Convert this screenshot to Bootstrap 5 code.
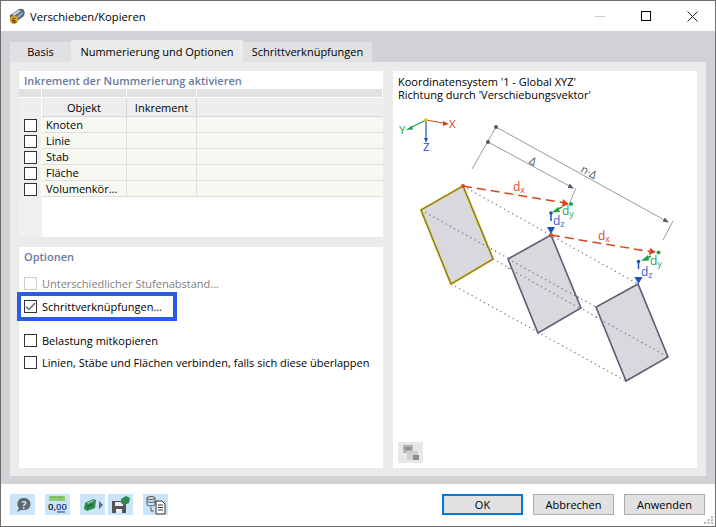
<!DOCTYPE html>
<html lang="de">
<head>
  <meta charset="UTF-8" />
  <title>Verschieben/Kopieren</title>
  <link href="https://cdn.jsdelivr.net/npm/bootstrap@5.3.3/dist/css/bootstrap.min.css" rel="stylesheet">
  <style>
    html, body { height: 527px; overflow: hidden; }
    body { font-family: "Open Sans", "Liberation Sans", sans-serif; font-size: 11px; line-height: 13px; color: #000; background: #fff; }
    .win { height: 527px; border: 1px solid #6f6f6f; display: flex; flex-direction: column; }
    .titlebar { height: 30px; flex: none; background: #fff; padding-left: 7px; font-size: 11.2px; }
    .ctl { width: 46px; height: 30px; display: flex; align-items: center; justify-content: center; }
    .dlg { height: 453px; flex: none; background: #d2d1d6; padding: 9px 9px 8px 9px; display: flex; flex-direction: column; }
    .nav-tabs.tabbar { border: 0; height: 22px; flex: none; align-items: flex-end; }
    .tabbar .nav-link { border: 0; border-radius: 0; background: #e1e1e3; color: #000; height: 20px; padding: 3px 0 0 0; text-align: center; margin: 0; line-height: 14px; }
    .tabbar .nav-link.active { background: #ebebeb; color: #000; height: 22px; padding-top: 5px; }
    .tb1 { width: 61px; } .tb2 { width: 172px; } .tb3 { width: 129px; }
    .pane { flex: 1; background: #ebebeb; padding: 9px 9px 8px 9px; display: flex; gap: 10px; min-height: 0; }
    .leftcol { width: 364px; display: flex; flex-direction: column; gap: 10px; }
    .whitebox { background: #fff; }
    .box-a { height: 166px; display: flex; flex-direction: column; }
    .box-b { flex: 1; }
    .box-c { width: 304px; position: relative; }
    .grp-title { color: #6a7a9e; font-weight: 600; height: 18px; padding: 3px 0 0 5px; }
    .gridwrap { flex: 1; background: #fff; position: relative; }
    .sheet { border-collapse: separate; border-spacing: 0; width: 364px; table-layout: fixed; }
    .sheet td, .sheet th { padding: 0; font-weight: 400; overflow: hidden; white-space: nowrap; }
    .sheet .band td { height: 9px; background: #e1e1e1; border-right: 1px solid #fff; border-bottom: 1px solid #fff; }
    .sheet .head th { height: 19px; background: #eee; text-align: center; border-right: 1px solid #d6d6d6; border-bottom: 1px solid #d6d6d6; }
    .sheet .head th:first-child { border-right: 1px solid #fff; border-bottom: 0; }
    .sheet .head th:last-child { border-right: 0; }
    .sheet .item td { height: 16px; background: #f7f8f2; border-right: 1px solid #dedede; border-bottom: 1px solid #dedede; padding-left: 4px; }
    .sheet .item td:first-child { background: #eee; border-right: 1px solid #fff; border-bottom: 0; padding: 0 0 0 5px; line-height: 0; }
    .sheet .item td:last-child { border-right: 0; }
    .rowfill { position: absolute; left: 0; top: 108px; bottom: 0; width: 23px; background: #f0f0f0; }
    .ck.form-check-input { width: 13px; height: 13px; margin: 0; border: 1px solid #333; border-radius: 0; background-color: #fff; flex: none; box-shadow: none; float: none; vertical-align: top; opacity: 1; }
    .ck.form-check-input:checked { background-color: #fff; border-color: #333; background-image: url("data:image/svg+xml,%3Csvg xmlns='http://www.w3.org/2000/svg' viewBox='0 0 13 13'%3E%3Cpath d='M2 6.5l3 3L11 3' fill='none' stroke='%23666' stroke-width='1.4'/%3E%3C/svg%3E"); background-size: 13px 13px; }
    .ck.form-check-input:disabled { border-color: #ccc; opacity: 1; }
    .opt { display: flex; align-items: center; gap: 5px; padding-left: 5px; height: 22px; white-space: nowrap; }
    .opt-off { color: #7f7f7f; margin-top: 7px; }
    .opt-gap { margin-top: 8px; }
    .marked { width: 160px; height: 29px; margin-left: -2px; margin-top: -2px; padding-left: 3px; border: 4px solid #2b5ce6; gap: 5px; display: flex; align-items: center; }
    .caption { padding: 4px 0 0 5px; }
    .drawing { position: absolute; left: 0; top: 29px; }
    .mini { position: absolute; left: 5px; top: 371px; width: 25px; height: 21px; background: #e8e8e8; padding: 0; border: 0; line-height: 0; }
    .foot { flex: 1; background: #fff; position: relative; padding: 10px 10px 0 9px; display: flex; }
    .tool { width: 25px; height: 21px; padding: 0; border: 0; border-radius: 0; background: #cce4f7; line-height: 0; display: flex; align-items: center; justify-content: center; }
    .cmd { width: 81px; height: 21px; padding: 0; border: 1px solid #adadad; border-radius: 0; background: #e1e1e1; color: #000; font-size: 11px; line-height: 13px; }
    .cmd:hover { background: #e1e1e1; color: #000; border-color: #adadad; }
    .cmd-main { border: 2px solid #0078d7; }
    .cmd-main:hover { border-color: #0078d7; }
    .grip { position: absolute; right: 1px; bottom: 1px; line-height: 0; }
    svg text { font-family: "Open Sans", "Liberation Sans", sans-serif; }
    .ms-10px { margin-left: 10px; }
    .ms-3px { margin-left: 3px; }
    .gap-10px { gap: 10px; }
    .flex-none { flex: none; }
  </style>
</head>
<body>
<div class="win">
  <div class="titlebar d-flex align-items-center">
    <svg width="18" height="18" viewBox="0 0 18 18" class="flex-none">
      <path d="M2 8 L11 2 Q14 1 16 3 Q17.500 6 16 9 L8 15 Q4 16 2.500 13 Q1.500 10 2 8Z" fill="#5c6b7c"/>
      <path d="M4 7 L11 3 L13 4 L6 9Z" fill="#c6d0da"/><path d="M8 10 L14 5 L15 7 L9 12Z" fill="#97a6b5"/>
      <circle cx="6" cy="13" r="4" fill="#d9a521"/>
      <text x="6" y="16" font-size="7.500" font-weight="700" text-anchor="middle" fill="#5a4300">6</text>
    </svg>
    <span class="ms-1">Verschieben/Kopieren</span>
    <div class="ms-auto d-flex">
      <div class="ctl"><svg width="10" height="10"><path d="M0 5.500H10" stroke="#ccc"/></svg></div>
      <div class="ctl"><svg width="10" height="10"><rect x=".5" y=".5" width="9" height="9" fill="none" stroke="#000"/></svg></div>
      <div class="ctl"><svg width="11" height="11"><path d="M.5 .5L10.500 10.500M10.500 .5L.5 10.500" stroke="#222"/></svg></div>
    </div>
  </div>

  <div class="dlg">
    <ul class="nav nav-tabs tabbar">
      <li class="nav-item"><a class="nav-link tb1" href="#">Basis</a></li>
      <li class="nav-item"><a class="nav-link tb2 active" href="#">Nummerierung und Optionen</a></li>
      <li class="nav-item"><a class="nav-link tb3" href="#">Schrittverknüpfungen</a></li>
    </ul>
    <div class="pane">
      <div class="leftcol">
        <div class="whitebox box-a">
          <div class="grp-title">Inkrement der Nummerierung aktivieren</div>
          <div class="gridwrap">
            <div class="rowfill"></div>
            <table class="sheet position-relative">
              <colgroup><col style="width:23px"><col style="width:85px"><col style="width:70px"><col></colgroup>
              <tr class="band"><td></td><td></td><td></td><td></td></tr>
              <tr class="head"><th></th><th>Objekt</th><th>Inkrement</th><th></th></tr>
              <tr class="item"><td><input class="form-check-input ck" type="checkbox"></td><td>Knoten</td><td></td><td></td></tr>
              <tr class="item"><td><input class="form-check-input ck" type="checkbox"></td><td>Linie</td><td></td><td></td></tr>
              <tr class="item"><td><input class="form-check-input ck" type="checkbox"></td><td>Stab</td><td></td><td></td></tr>
              <tr class="item"><td><input class="form-check-input ck" type="checkbox"></td><td>Fläche</td><td></td><td></td></tr>
              <tr class="item"><td><input class="form-check-input ck" type="checkbox"></td><td>Volumenkör...</td><td></td><td></td></tr>
            </table>
          </div>
        </div>
        <div class="whitebox box-b">
          <div class="grp-title">Optionen</div>
          <div class="opt opt-off"><input class="form-check-input ck" type="checkbox" disabled><span>Unterschiedlicher Stufenabstand...</span></div>
          <div class="marked"><input class="form-check-input ck" type="checkbox" checked><span>Schrittverknüpfungen...</span></div>
          <div class="opt opt-gap"><input class="form-check-input ck" type="checkbox"><span>Belastung mitkopieren</span></div>
          <div class="opt"><input class="form-check-input ck" type="checkbox"><span>Linien, Stäbe und Flächen verbinden, falls sich diese überlappen</span></div>
        </div>
      </div>

      <div class="whitebox box-c">
        <div class="caption">Koordinatensystem '1 - Global XYZ'<br>Richtung durch 'Verschiebungsvektor'</div>
        <!-- diagram coordinates are the screenshot's -->
        <svg class="drawing" width="304" height="340" viewBox="393 100 304 340">
          <defs>
            <marker id="tipg" markerWidth="6" markerHeight="6" refX="5" refY="3" orient="auto"><path d="M0 0.5L6 3L0 5.500Z" fill="#555a6b"/></marker>
          </defs>
          <!-- corner lines -->
          <g stroke="#777780" stroke-width="1.2" stroke-dasharray="1.3 3.4" fill="none">
            <path d="M463 186L638 284"/><path d="M421 210L596 307"/>
            <path d="M493 259L668 357"/><path d="M451 284L626 381"/>
          </g>
          <!-- blocks -->
          <path d="M463 186L421 210L451 284L493 259Z" fill="#d9d8de" stroke="#e2c82a" stroke-width="2.4"/>
          <path d="M463 186L421 210L451 284L493 259Z" fill="none" stroke="#66624f" stroke-width="1"/>
          <path d="M551 235L508 259L538 333L581 308Z" fill="#d9d8de" stroke="#5f5d72" stroke-width="1.6"/>
          <path d="M638 284L596 307L626 381L668 357Z" fill="#d9d8de" stroke="#5f5d72" stroke-width="1.6"/>
          <g stroke="#777780" stroke-width="1.2" stroke-dasharray="1.3 3.4" fill="none">
            <path d="M421 210L493 250"/><path d="M508 259L581 299"/><path d="M508 268L581 309"/><path d="M596 317L668 357"/>
          </g>
          <!-- dimensions -->
          <g stroke="#9a9aa2" fill="none">
            <path d="M496 127L668 222" marker-end="url(#tipg)"/>
            <path d="M488 142L573 188" marker-end="url(#tipg)"/>
            <path d="M496 127L472 169"/><path d="M673 221L663 240"/><path d="M576 188L570 202"/>
          </g>
          <circle cx="496" cy="127" r="2" fill="#555a6b"/><circle cx="488" cy="142" r="2" fill="#555a6b"/>
          <text x="533" y="165" font-size="11" fill="#555" text-anchor="middle" transform="rotate(29 533 161)">Δ</text>
          <text x="589" y="176" font-size="11" fill="#555" text-anchor="middle" transform="rotate(29 589 172)">n·Δ</text>
          <!-- first offset -->
          <path d="M463 186L565 203" stroke="#d2491f" stroke-width="1.5" stroke-dasharray="9 5" fill="none"/>
          <path d="M563 199L569 204L562 207Z" fill="#d2491f"/>
          <circle cx="463" cy="186" r="2" fill="#d2491f"/>
          <circle cx="571" cy="204" r="2" fill="#1aa34a"/>
          <path d="M562 207L556 210" stroke="#1aa34a" stroke-width="1.4"/><path d="M558 207L552 212.500L560 212Z" fill="#1aa34a"/>
          <path d="M551 214V221" stroke="#1b4fc4" stroke-width="1.5"/><circle cx="551" cy="213" r="1.8" fill="#1b4fc4"/>
          <path d="M547 227H555L551 234Z" fill="#1b4fc4"/>
          <circle cx="551" cy="235" r="2" fill="#d2491f"/>
          <text x="513" y="191" font-size="12" fill="#d2491f">d<tspan font-size="9" dy="2">x</tspan></text>
          <text x="562" y="215" font-size="12" fill="#27a659">d<tspan font-size="9" dy="2">y</tspan></text>
          <text x="553" y="225" font-size="12" fill="#2d5fcf">d<tspan font-size="9" dy="2">z</tspan></text>
          <!-- second offset -->
          <path d="M551 235L652 252" stroke="#d2491f" stroke-width="1.5" stroke-dasharray="9 5" fill="none"/>
          <path d="M650 248L656 252L649 255Z" fill="#d2491f"/>
          <circle cx="658.500" cy="252.500" r="2" fill="#1aa34a"/>
          <path d="M651 256L646 258.500" stroke="#1aa34a" stroke-width="1.4"/><path d="M648 255L641 261L649 260.500Z" fill="#1aa34a"/>
          <path d="M638.500 262V269" stroke="#1b4fc4" stroke-width="1.5"/><circle cx="638.500" cy="261.500" r="1.8" fill="#1b4fc4"/>
          <path d="M634.500 277H642.500L638.500 284Z" fill="#1b4fc4"/>
          <text x="598" y="240" font-size="12" fill="#d2491f">d<tspan font-size="9" dy="2">x</tspan></text>
          <text x="650" y="265" font-size="12" fill="#27a659">d<tspan font-size="9" dy="2">y</tspan></text>
          <text x="641" y="276" font-size="12" fill="#2d5fcf">d<tspan font-size="9" dy="2">z</tspan></text>
          <!-- axes -->
          <path d="M426 120L446 123.500" stroke="#d2491f" stroke-width="1.2"/><path d="M443 121L449 124L443 126Z" fill="#d2491f"/>
          <path d="M426 120L410 128" stroke="#1aa34a" stroke-width="1.2"/><path d="M412 125.500L406 130L413 129.500Z" fill="#1aa34a"/>
          <path d="M426 120V140" stroke="#1b4fc4" stroke-width="1.2"/><path d="M424 138H428L426 143Z" fill="#1b4fc4"/>
          <circle cx="426" cy="120" r="1.8" fill="#e8c311"/>
          <text x="449" y="128" font-size="11.500" fill="#d2491f">X</text>
          <text x="399" y="134" font-size="11.500" fill="#27a659">Y</text>
          <text x="423" y="151" font-size="11.500" fill="#1b4fc4">Z</text>
        </svg>
        <button class="mini" type="button">
          <svg width="25" height="21" viewBox="0 0 25 21">
            <rect x="5" y="3" width="10" height="8" fill="#b3b3b3"/><rect x="7" y="5" width="6" height="3" fill="#8d8d8d"/>
            <rect x="9" y="9" width="11" height="9" fill="#cfcfcf"/><rect x="15" y="13" width="6" height="5" fill="#8c8c8c"/>
          </svg>
        </button>
      </div>
    </div>
  </div>

  <div class="foot">
    <button class="btn tool" type="button">
      <svg width="16" height="16" viewBox="0 0 16 16"><path d="M9 1a6 6 0 0 1 1 12H6l-4 2 2-4A6 6 0 0 1 9 1Z" fill="#5d6770"/><text x="9" y="11.500" font-size="10.500" font-weight="700" text-anchor="middle" fill="#cce4f7">?</text></svg>
    </button>
    <button class="btn tool ms-10px" type="button">
      <svg width="25" height="21" viewBox="0 0 25 21"><rect x="4" y="2" width="16" height="5" fill="#8ecb6e"/><path d="M7 2v2M10 2v2M13 2v2M16 2v2" stroke="#5f9f45"/><text x="12.500" y="16" font-size="9.500" text-anchor="middle" font-weight="600" fill="#111">0,<tspan fill="#1d3b8a">00</tspan></text><path d="M12 18H20" stroke="#1d3b8a"/></svg>
    </button>
    <button class="btn tool ms-10px" type="button">
      <svg width="25" height="21" viewBox="0 0 25 21"><path d="M5 9l8-4 3 1-1 8-8 3-3-2Z" fill="#2f8a4d"/><path d="M7 9l6-3 1 1-6 3Z" fill="#9ed0ae"/><path d="M7 13l6-3" stroke="#174f2b"/><path d="M19 7l4 4-4 4Z" fill="#6b6b6b"/></svg>
    </button>
    <button class="btn tool ms-3px" type="button">
      <svg width="25" height="21" viewBox="0 0 25 21"><path d="M4 7h12l2 2v10H4Z" fill="#555"/><rect x="7" y="8" width="8" height="4" fill="#e8eef2"/><rect x="8" y="15" width="6" height="4" fill="#e8eef2"/><path d="M13 5l5-3 4 2-1 5-5 2-3-2Z" fill="#2f8a4d"/></svg>
    </button>
    <button class="btn tool ms-10px" type="button">
      <svg width="25" height="21" viewBox="0 0 25 21"><g fill="none" stroke="#555" stroke-width="1"><ellipse cx="8" cy="4" rx="4" ry="1.500"/><path d="M4 4v7c0 1 8 1 8 0V4M4 7.500c0 1 8 1 8 0"/><path d="M8 13v4h3"/></g><path d="M13 7h6l3 3v10h-9Z" fill="#fff" stroke="#333"/><path d="M15 11h5M15 13.500h5M15 16h5" stroke="#333"/></svg>
    </button>
    <div class="ms-auto d-flex gap-10px">
      <button class="btn cmd cmd-main" type="button">OK</button>
      <button class="btn cmd" type="button">Abbrechen</button>
      <button class="btn cmd" type="button">Anwenden</button>
    </div>
    <svg class="grip" width="10" height="10"><g fill="#b5b5b5"><rect x="7" y="1" width="2" height="2"/><rect x="3.500" y="4" width="2" height="2"/><rect x="7" y="4" width="2" height="2"/><rect x="0" y="7" width="2" height="2"/><rect x="3.500" y="7" width="2" height="2"/><rect x="7" y="7" width="2" height="2"/></g></svg>
  </div>
</div>
<script src="https://cdn.jsdelivr.net/npm/bootstrap@5.3.3/dist/js/bootstrap.bundle.min.js"></script>
</body>
</html>
